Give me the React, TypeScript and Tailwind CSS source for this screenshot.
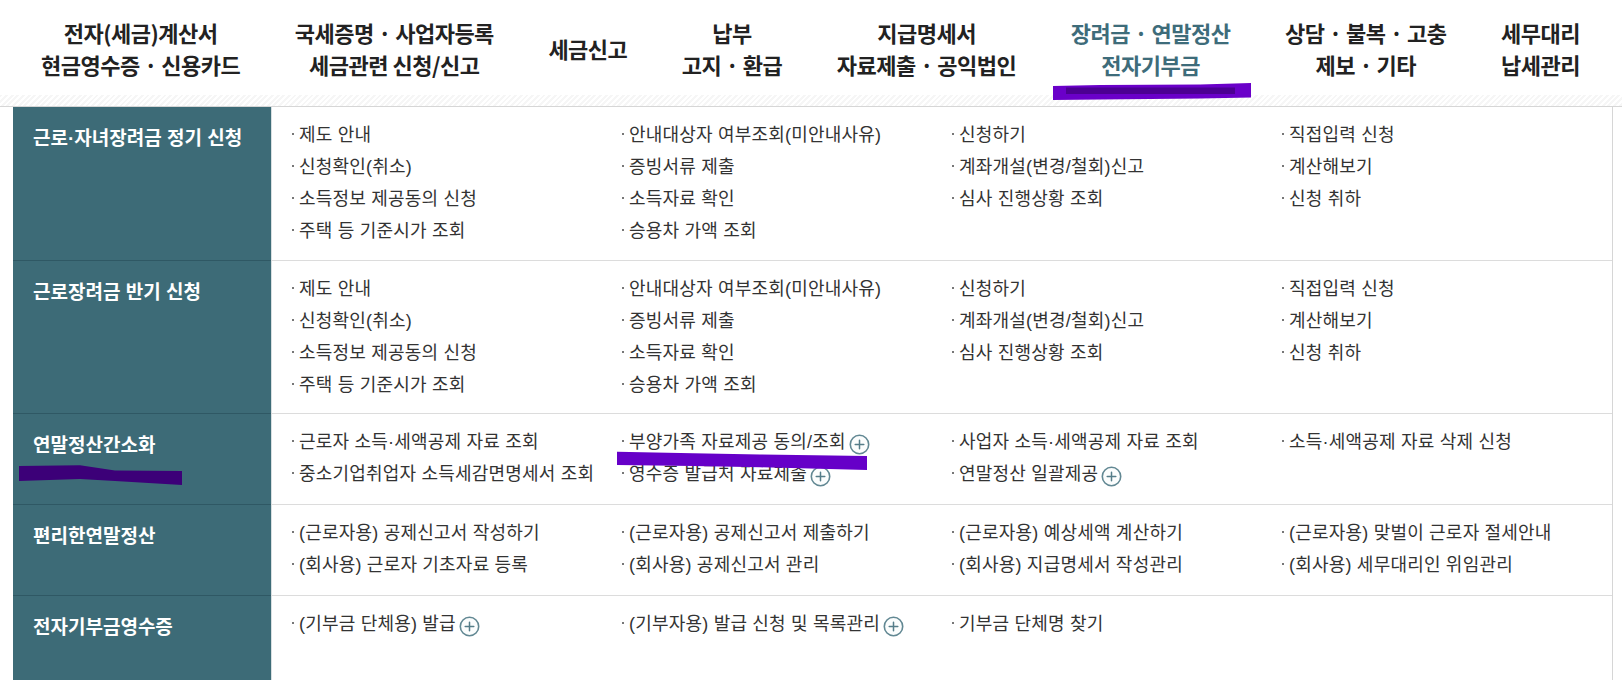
import React from "react";

const navItems: { lines: string[]; active?: boolean }[] = [
  { lines: ["전자(세금)계산서", "현금영수증 · 신용카드"] },
  { lines: ["국세증명 · 사업자등록", "세금관련 신청/신고"] },
  { lines: ["세금신고"] },
  { lines: ["납부", "고지 · 환급"] },
  { lines: ["지급명세서", "자료제출 · 공익법인"] },
  { lines: ["장려금 · 연말정산", "전자기부금"], active: true },
  { lines: ["상담 · 불복 · 고충", "제보 · 기타"] },
  { lines: ["세무대리", "납세관리"] },
];

type Item = { t: string; plus?: boolean };
type Row = { title: string; cols: Item[][]; pb: string };

const jangCols: Item[][] = [
  [{ t: "제도 안내" }, { t: "신청확인(취소)" }, { t: "소득정보 제공동의 신청" }, { t: "주택 등 기준시가 조회" }],
  [{ t: "안내대상자 여부조회(미안내사유)" }, { t: "증빙서류 제출" }, { t: "소득자료 확인" }, { t: "승용차 가액 조회" }],
  [{ t: "신청하기" }, { t: "계좌개설(변경/철회)신고" }, { t: "심사 진행상황 조회" }],
  [{ t: "직접입력 신청" }, { t: "계산해보기" }, { t: "신청 취하" }],
];

const rows: Row[] = [
  { title: "근로·자녀장려금 정기 신청", cols: jangCols, pb: "pb-[13px]" },
  { title: "근로장려금 반기 신청", cols: jangCols, pb: "pb-[12px]" },
  {
    title: "연말정산간소화",
    pb: "pb-[14px]",
    cols: [
      [{ t: "근로자 소득·세액공제 자료 조회" }, { t: "중소기업취업자 소득세감면명세서 조회" }],
      [{ t: "부양가족 자료제공 동의/조회", plus: true }, { t: "영수증 발급처 자료제출", plus: true }],
      [{ t: "사업자 소득·세액공제 자료 조회" }, { t: "연말정산 일괄제공", plus: true }],
      [{ t: "소득·세액공제 자료 삭제 신청" }],
    ],
  },
  {
    title: "편리한연말정산",
    pb: "pb-[14px]",
    cols: [
      [{ t: "(근로자용) 공제신고서 작성하기" }, { t: "(회사용) 근로자 기초자료 등록" }],
      [{ t: "(근로자용) 공제신고서 제출하기" }, { t: "(회사용) 공제신고서 관리" }],
      [{ t: "(근로자용) 예상세액 계산하기" }, { t: "(회사용) 지급명세서 작성관리" }],
      [{ t: "(근로자용) 맞벌이 근로자 절세안내" }, { t: "(회사용) 세무대리인 위임관리" }],
    ],
  },
  {
    title: "전자기부금영수증",
    pb: "pb-[60px]",
    cols: [
      [{ t: "(기부금 단체용) 발급", plus: true }],
      [{ t: "(기부자용) 발급 신청 및 목록관리", plus: true }],
      [{ t: "기부금 단체명 찾기" }],
      [],
    ],
  },
];

function PlusCircle() {
  return (
    <svg width="21" height="21" viewBox="0 0 21 21" className="ml-[3px] shrink-0 translate-y-[2px]">
      <circle cx="10.5" cy="10.5" r="9.2" fill="#fbfdfd" stroke="#628893" strokeWidth="1.6" />
      <path d="M10.5 6.2v8.6M6.2 10.5h8.6" stroke="#557d89" strokeWidth="1.5" strokeLinecap="round" />
    </svg>
  );
}

export default function App() {
  return (
    <div className="relative w-[1622px] h-[680px] overflow-hidden bg-white font-['Noto_Sans_CJK_KR','Noto_Sans',sans-serif]">
      <header>
        <nav className="h-[95px] flex items-center justify-between pl-[41px] pr-[42px]">
          {navItems.map((n, i) => (
            <div
              key={i}
              className={
                "text-center text-[22px] leading-[32px] tracking-[-0.5px] font-semibold whitespace-nowrap " +
                (n.active ? "text-[#3e6c7a]" : "text-[#222]")
              }
            >
              {n.lines.map((l, j) => (
                <div key={j}>{l}</div>
              ))}
            </div>
          ))}
        </nav>
        <div className="h-[12px] border-b border-[#d6d6d6] bg-[repeating-linear-gradient(135deg,#f6f6f6_0px,#f6f6f6_2px,#ffffff_2px,#ffffff_4px)]" />
      </header>

      <div className="ml-[13px] w-[1600px] border-r border-[#d6d6d6] font-['Liberation_Sans','Noto_Sans_CJK_KR',sans-serif]">
        {rows.map((r, i) => (
          <div key={i} className="flex">
            <div className="w-[258px] shrink-0 bg-[#3d6b77] border-b border-[#2f5864] pl-[20px] pt-[20px] text-white text-[19px] leading-[24px] font-bold whitespace-nowrap">
              {r.title}
            </div>
            <div
              className={
                "flex-1 grid grid-cols-4 pl-[20px] pt-[12px] border-l border-[#d8dfe1] border-b border-b-[#dcdcdc] " +
                r.pb
              }
            >
              {r.cols.map((c, ci) => (
                <div key={ci} className="flex flex-col">
                  {c.map((it, ii) => (
                    <div
                      key={ii}
                      className="flex items-center h-[32px] text-[18px] tracking-[0.2px] text-[#333] whitespace-nowrap"
                    >
                      <span className="w-[2px] h-[2px] bg-[#777] mr-[5px] shrink-0 -translate-y-[1px]" />
                      <span>{it.t}</span>
                      {it.plus && <PlusCircle />}
                    </div>
                  ))}
                </div>
              ))}
            </div>
          </div>
        ))}
      </div>

      <svg className="absolute inset-0 pointer-events-none" width="1622" height="680" viewBox="0 0 1622 680">
        <path d="M1053 86 L1100 85 L1200 84.5 L1251 83 L1251 97.5 L1200 98.5 L1100 99.5 L1053 100 Z" fill="#6a00c9" />
        <rect x="1066" y="87.5" width="169" height="6.5" fill="#4c0092" />
        <path d="M617 451.7 L693 453.3 L760 454.5 L867 456 L867 470 L760 467.3 L693 466 L617 465 Z" fill="#6600c8" />
        <path d="M19 466 L80 465.3 L115 470.5 L182 471 L182 485 L115 481 L80 479 L19 481 Z" fill="#3c0078" />
      </svg>
    </div>
  );
}
